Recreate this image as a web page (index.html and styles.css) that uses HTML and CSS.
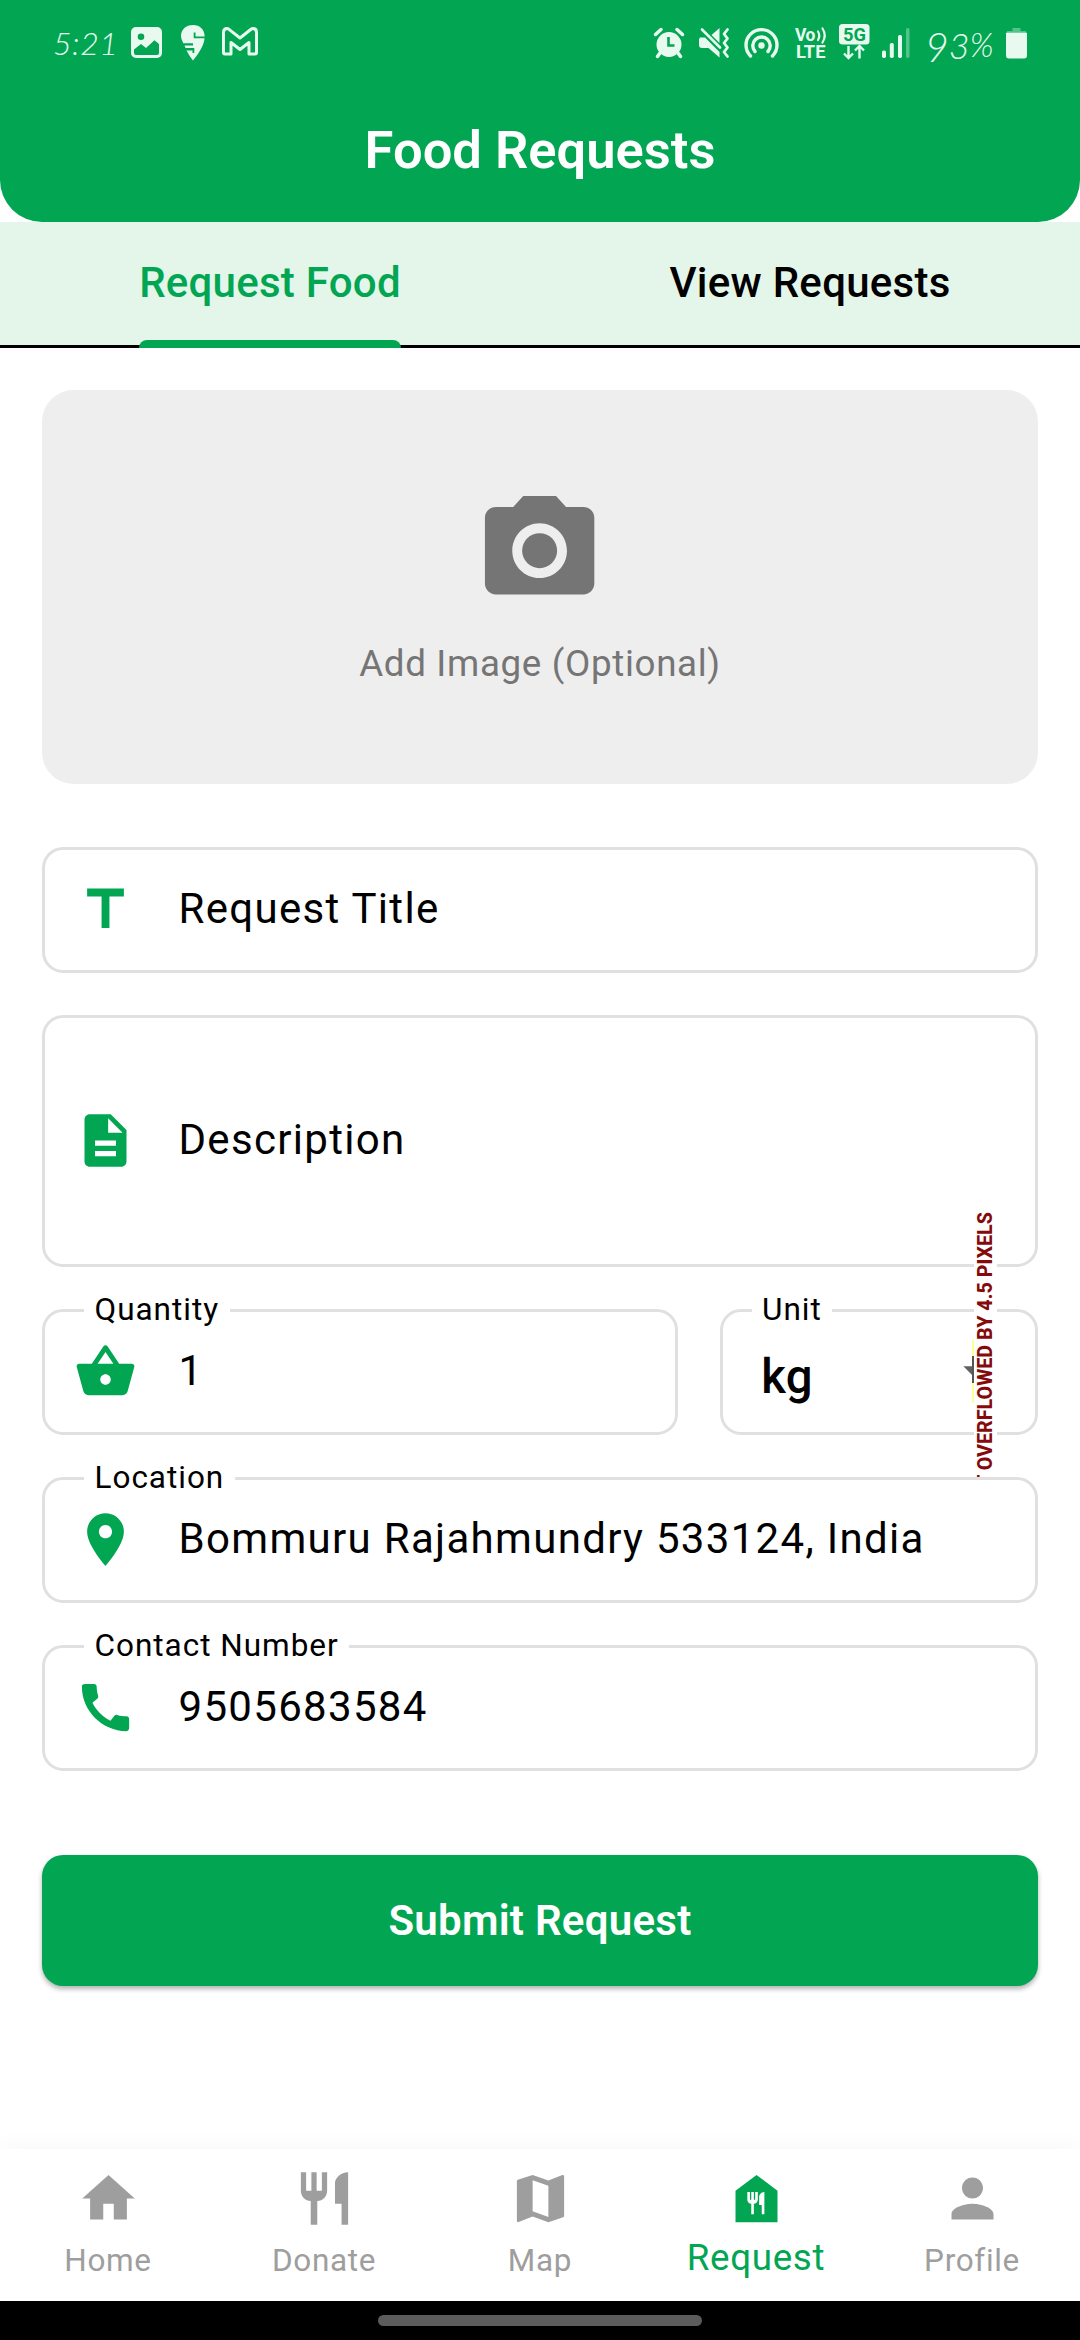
FILE: index.html
```html
<!DOCTYPE html>
<html lang="en">
<head>
<meta charset="utf-8">
<title>Food Requests</title>
<link rel="stylesheet" href="styles.css">
</head>
<body>
<div class="screen">
  <header class="header">
    <div class="status">
      <div class="status-left">
        <span class="clock">5:21</span>
        <svg class="s-image" width="32" height="32" viewBox="0 0 32 32"><path fill-rule="evenodd" d="M5 0h21a5 5 0 0 1 5 5v21a5 5 0 0 1-5 5H5a5 5 0 0 1-5-5V5a5 5 0 0 1 5-5zM10 6.500a3.300 3.300 0 1 0 0 6.600a3.300 3.300 0 1 0 0-6.600zM3 22.500V26q0 2 2 2H26q2 0 2-2V17l-4.500-3.800L15 21l-5-4z"/></svg>
        <svg class="s-pin" width="24" height="36" viewBox="0 0 24 36"><path d="M12 0C19 0 23.500 4.500 23.700 11.500H14.500V7.500H12.700V13.200H23.500C23.300 18 20 26 12 35.500C9.800 32.800 7.500 29.500 5.500 25.500H11.500V28H13.300V23H4.500L3.500 20.500H12V18.200H2.300C.8 15 0 13 0 11C0 4.500 5 0 12 0z"/></svg>
        <svg class="s-mail" width="36" height="29" viewBox="0 0 36 29"><path d="M1.500 5.500Q1.500 1.500 5 1.500Q6 1.500 7 2.300L18 11L29 2.300Q30 1.500 31 1.500Q34.500 1.500 34.500 5.500V25.500Q34.500 27 33 27H27V15.500L18 22.500L9 15.500V27H3Q1.500 27 1.500 25.500z" fill="none" stroke="currentColor" stroke-width="3" stroke-linejoin="round"/></svg>
      </div>
      <div class="status-right">
        <svg width="30" height="30" viewBox="0 0 30 30"><circle cx="15" cy="16.500" r="12.500"/><path d="M1.500 6.500L7 1.500M28.500 6.500L23 1.500M6 25L3.500 28.500M24 25L26.500 28.500" stroke="currentColor" stroke-width="3.500" stroke-linecap="round"/><path d="M14.500 9V17.500H20.500" stroke="#02a652" stroke-width="2.600" fill="none"/></svg>
        <svg class="s-mute" width="31" height="30" viewBox="0 0 31 30"><path d="M1 9.500H6L20.500 24V29.500L9.500 20H3Q0 20 0 17V11zM12.500 7L20.500 0V15z"/><path d="M3 1.500L21 19.500" stroke="currentColor" stroke-width="2.600" stroke-linecap="round"/><path d="M28.500 1.500L25 6L28.500 10.500L25 15L28.500 19.500L25 24L28.500 28.500" stroke="currentColor" stroke-width="2.800" fill="none" stroke-linecap="round" stroke-linejoin="round"/></svg>
        <svg class="s-hot" width="35" height="31" viewBox="0 0 35 31"><g fill="none" stroke="currentColor" stroke-width="3.400" stroke-linecap="round"><path d="M6.500 29A15.500 15.500 0 1 1 28.500 29"/><path d="M11 24.500A8.700 8.700 0 1 1 24 24.500"/></g><circle cx="17.500" cy="18.500" r="3.200"/></svg>
        <svg class="s-lte" width="32" height="32" viewBox="0 0 32 32"><text x="0" y="13.500" textLength="20.500" font-size="17.500" font-weight="700">Vo</text><text x="1" y="31" textLength="29.500" lengthAdjust="spacingAndGlyphs" font-size="17.500" font-weight="700">LTE</text><path d="M23 4.500Q25.500 8.500 23 13M27.500 1.500Q32 8.500 27.500 15.500" fill="none" stroke="currentColor" stroke-width="2.200" stroke-linecap="round"/></svg>
        <svg class="s-5g" width="31" height="36" viewBox="0 0 31 36"><rect width="30.500" height="20.500" rx="3.500"/><text x="4" y="17" textLength="23" lengthAdjust="spacingAndGlyphs" font-size="19" font-weight="700" class="cut">5G</text><path d="M9.500 22V34M5 29.500L9.500 34L14 29.500M20.500 34.500V22M16 26.500L20.500 22L25 26.500" fill="none" stroke="currentColor" stroke-width="2.400"/></svg>
        <svg class="s-sig" width="28" height="30" viewBox="0 0 28 30"><rect x="0" y="22.500" width="4" height="7.500" rx="1.700"/><rect x="7.800" y="15" width="4" height="15" rx="1.700"/><rect x="16" y="7" width="4" height="23" rx="1.700"/><rect x="24" y="0" width="3.500" height="30" rx="1.700" opacity=".35"/></svg>
        <span class="percent"><span class="nine">9</span><span class="three">3</span><span class="pc">%</span></span>
        <svg class="s-bat" width="21" height="31" viewBox="0 0 21 31"><path d="M6.500 0H14.500V3H20V5H1V3H6.500z" opacity=".35"/><path d="M0 4.700H21V27.500Q21 30.500 18 30.500H3Q0 30.500 0 27.500z"/></svg>
      </div>
    </div>
    <h1 class="title">Food Requests</h1>
  </header>

  <nav class="tabs">
    <div class="tab tab-active"><span class="tab-label">Request Food</span></div>
    <div class="tab"><span class="tab-label">View Requests</span></div>
  </nav>

  <main class="form">
    <div class="upload">
      <svg class="camera" viewBox="0 0 24 24"><circle cx="12" cy="12" r="3.200"/><path d="M9 2L7.170 4H4c-1.100 0-2 .9-2 2v12c0 1.100.9 2 2 2h16c1.100 0 2-.9 2-2V6c0-1.100-.9-2-2-2h-3.170L15 2H9zm3 15c-2.760 0-5-2.240-5-5s2.240-5 5-5 5 2.240 5 5-2.240 5-5 5z"/></svg>
      <span class="upload-text">Add Image (Optional)</span>
    </div>

    <div class="field field-first">
      <svg class="icon" viewBox="0 0 24 24"><path d="M5 4v3h5.500v12h3V7H19V4z"/></svg>
      <span class="value">Request Title</span>
    </div>
    <div class="field field-tall">
      <svg class="icon" viewBox="0 0 24 24"><path d="M14 2H6c-1.100 0-1.990.9-1.990 2L4 20c0 1.100.89 2 1.990 2H18c1.100 0 2-.9 2-2V8l-6-6zm2 16H8v-2h8v2zm0-4H8v-2h8v2zm-3-5V3.500L18.500 9H13z"/></svg>
      <span class="value">Description</span>
    </div>
    <div class="row">
      <div class="field quantity">
        <span class="label">Quantity</span>
        <svg class="icon" viewBox="0 0 24 24"><path d="M17.210 9l-4.380-6.560c-.19-.28-.51-.42-.83-.42-.32 0-.64.14-.83.43L6.790 9H2c-.55 0-1 .45-1 1 0 .09.01.18.04.27l2.540 9.270c.23.84 1 1.460 1.920 1.460h13c.92 0 1.690-.62 1.930-1.460l2.540-9.270L23 10c0-.55-.45-1-1-1h-4.790zM9 9l3-4.400L15 9H9zm3 8c-1.100 0-2-.9-2-2s.9-2 2-2 2 .9 2 2-.9 2-2 2z"/></svg>
        <span class="value">1</span>
      </div>
      <div class="field unit">
        <span class="label label-unit">Unit</span>
        <span class="unit-value">kg</span>
        <svg class="arrow" viewBox="0 0 24 24"><path d="M7 10l5 5 5-5z"/></svg>
        <div class="stripe"></div>
        <div class="overflow"><span class="overflow-text">RIGHT OVERFLOWED BY 4.5 PIXELS</span></div>
      </div>
    </div>
    <div class="field">
      <span class="label">Location</span>
      <svg class="icon" viewBox="0 0 24 24"><path d="M12 2C8.130 2 5 5.130 5 9c0 5.250 7 13 7 13s7-7.750 7-13c0-3.870-3.130-7-7-7zm0 9.500c-1.380 0-2.500-1.120-2.500-2.500s1.120-2.500 2.500-2.500 2.500 1.120 2.500 2.500-1.120 2.500-2.500 2.500z"/></svg>
      <span class="value">Bommuru Rajahmundry 533124, India</span>
    </div>
    <div class="field">
      <span class="label">Contact Number</span>
      <svg class="icon" viewBox="0 0 24 24"><path d="M20.010 15.380c-1.230 0-2.420-.2-3.530-.56-.35-.12-.74-.03-1.010.24l-1.570 1.970c-2.830-1.350-5.480-3.900-6.890-6.830l1.950-1.660c.27-.28.35-.67.24-1.020-.37-1.110-.56-2.300-.56-3.530 0-.54-.45-.99-.99-.99H4.190C3.650 3 3 3.240 3 3.990 3 13.280 10.730 21 20.010 21c.71 0 .99-.63.99-1.180v-3.450c0-.54-.45-.99-.99-.99z"/></svg>
      <span class="value">9505683584</span>
    </div>
    <button class="submit">Submit Request</button>
  </main>

  <nav class="bottom">
    <div class="item"><svg class="icon" viewBox="0 0 24 24"><path d="M10 20v-6h4v6h5v-8h3L12 3 2 12h3v8z"/></svg><span>Home</span></div>
    <div class="item"><svg class="icon" viewBox="0 0 24 24"><path d="M11 9H9V2H7v7H5V2H3v7c0 2.120 1.660 3.840 3.750 3.970V22h2.500v-9.030C11.340 12.840 13 11.120 13 9V2h-2v7zm5-3v8h2.500v8H21V2c-2.760 0-5 2.240-5 4z"/></svg><span>Donate</span></div>
    <div class="item"><svg class="icon" viewBox="0 0 24 24"><path d="M20.500 3l-.16.03L15 5.100 9 3 3.360 4.900c-.21.07-.36.25-.36.48V20.500c0 .28.22.5.5.5l.16-.03L9 18.900l6 2.100 5.640-1.900c.21-.07.36-.25.36-.48V3.500c0-.28-.22-.5-.5-.5zM15 19l-6-2.110V5l6 2.110V19z"/></svg><span>Map</span></div>
    <div class="item item-active"><svg class="icon" viewBox="0 0 24 24"><path d="M12 3L4 9v12h16V9L12 3zm.5 9.500c0 .83-.67 1.500-1.500 1.500v4h-1v-4c-.83 0-1.500-.67-1.500-1.500v-3h1v3h.5v-3h1v3h.5v-3h1v3zM15 18h-1v-3.500h-1v-3c0-1.100.9-2 2-2V18z"/></svg><span>Request</span></div>
    <div class="item"><svg class="icon" viewBox="0 0 24 24"><path d="M12 12c2.210 0 4-1.790 4-4s-1.790-4-4-4-4 1.790-4 4 1.790 4 4 4zm0 2c-2.670 0-8 1.340-8 4v2h16v-2c0-2.660-5.330-4-8-4z"/></svg><span>Profile</span></div>
  </nav>
  <div class="gesture"><div class="pill"></div></div>
</div>
</body>
</html>
```
FILE: styles.css
```css
* { box-sizing: border-box; }
body { margin: 0; background: #fff; font-family: Roboto, "Liberation Sans", sans-serif; color: #000; }
svg { display: block; flex: none; fill: currentColor; overflow: visible; }
.screen { width: 1080px; height: 2340px; display: flex; flex-direction: column; overflow: hidden; background: #fff; }

.header { height: 222px; flex: none; background: #02a652; border-radius: 0 0 42px 42px; color: #fff; display: flex; flex-direction: column; }
.status { height: 84px; display: flex; justify-content: space-between; padding: 0 53px; color: #e8faf0; }
.status-left, .status-right { display: flex; align-items: flex-start; }
.clock { width: 78px; padding-top: 23px; font: italic 300 32px/40px Lato, sans-serif; letter-spacing: .5px; white-space: nowrap; }
.s-image { margin-top: 27px; }
.s-pin { margin: 25px 0 0 18px; }
.s-mail { margin: 27px 0 0 17px; }
.status-right > svg { margin-top: 28px; }
.status-right > .s-mute { margin-left: 15px; }
.status-right > .s-hot { margin: 27px 0 0 14px; }
.status-right > .s-lte { margin: 27px 0 0 16px; }
.status-right > .s-5g { margin: 24px 0 0 12px; }
.status-right > .s-sig { margin-left: 12px; }
.cut { fill: #02a652; }
.percent { width: 78px; height: 84px; margin-left: 15px; display: flex; align-items: flex-start; font-family: Lato, sans-serif; font-style: italic; font-weight: 300; }
.nine { padding-top: 26px; font-size: 41px; line-height: 42px; }
.three { padding-top: 25px; font-size: 36px; line-height: 40px; }
.pc { padding-top: 24px; font-size: 33px; line-height: 40px; }
.status-right > .s-bat { margin: 28px 0 0 3px; }
.title { margin: 0; padding-top: 36px; font-size: 52.500px; font-weight: 600; line-height: 60px; text-align: center; }

.tabs { height: 126px; flex: none; display: flex; background: #e4f5ea; border-bottom: 3px solid #000; }
.tab { flex: 1; height: 126px; display: flex; justify-content: center; }
.tab-label { height: 126px; line-height: 122px; font-size: 42px; font-weight: 500; letter-spacing: .26px; }
.tab-active .tab-label { color: #02a652; position: relative; }
.tab-active .tab-label::after { content: ""; position: absolute; left: 0; right: 0; bottom: 0; height: 8px; border-radius: 8px 8px 0 0; background: #02a652; }

.form { flex: 1; display: flex; flex-direction: column; gap: 42px; padding: 42px 42px 0; }
.upload { height: 393.750px; flex: none; border-radius: 31.500px; background: #eee; color: #757575; display: flex; flex-direction: column; align-items: center; justify-content: center; gap: 21px; }
.camera { width: 131.250px; height: 131.250px; }
.upload-text { font-size: 36.750px; height: 52.500px; line-height: 54.500px; letter-spacing: .660px; }
.field { position: relative; height: 126px; flex: none; border: 3px solid #e0e0e0; border-radius: 21px; display: flex; align-items: center; }
.field-first { margin-top: 21px; }
.field-tall { height: 252px; }
.icon { width: 63px; height: 63px; }
.field .icon { margin-left: 28.500px; color: #02a652; }
.value { margin-left: 42px; padding-bottom: 2px; font-size: 42px; letter-spacing: 1.310px; white-space: nowrap; }
.label { position: absolute; left: 39px; top: -21px; padding: 0 10.500px; background: #fff; font-size: 31.500px; line-height: 37px; letter-spacing: .980px; }
.label-unit { left: 28.500px; }
.row { display: flex; gap: 42px; }
.quantity { width: 636px; }
.unit { flex: 1; }
.unit-value { margin-left: 38.250px; padding-top: 10px; font-size: 47.250px; font-weight: 500; letter-spacing: .260px; }
.arrow { position: absolute; left: 222.300px; top: 28.500px; width: 63px; height: 63px; color: #616161; }
.stripe { position: absolute; left: 249px; top: 28.500px; width: 2px; height: 63px; background: linear-gradient(#ffff96 16px, #555 16px 43px, #ffff96 43px); }
.overflow { position: absolute; left: 251px; top: -107px; width: 23px; height: 272px; background: #fff; overflow: hidden; }
.overflow-text { position: absolute; left: 0; top: 7px; writing-mode: vertical-rl; transform: rotate(180deg); font-size: 19.690px; line-height: 23px; font-weight: 800; color: #850a0c; white-space: nowrap; }
.submit { height: 131.250px; flex: none; margin-top: 42px; padding: 0; border: 0; border-radius: 21px; background: #02a652; color: #fff; font: 600 42px Roboto, sans-serif; letter-spacing: .260px; box-shadow: 0 3px 5px rgba(0,0,0,.3); }

.bottom { height: 152px; flex: none; display: flex; background: #fff; box-shadow: 0 -4px 20px rgba(0,0,0,.03); color: #9e9e9e; }
.item { flex: 1; padding-top: 18px; display: flex; flex-direction: column; align-items: center; font-size: 31.500px; line-height: 37px; letter-spacing: .660px; }
.item span { margin-top: 12px; }
.item-active { color: #02a652; font-size: 36.750px; }
.item-active span { margin-top: 9px; }
.gesture { height: 39px; flex: none; background: #000; display: flex; justify-content: center; padding-top: 14px; }
.pill { width: 324px; height: 11px; border-radius: 5.500px; background: #5c5c5c; }
```
